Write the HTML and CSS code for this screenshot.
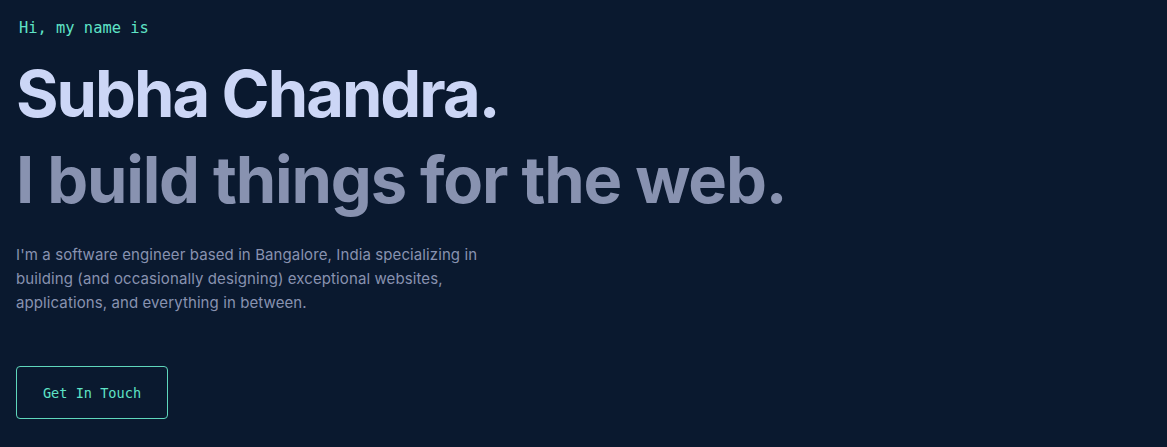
FILE: index.html
```html
<!DOCTYPE html>
<html lang="en">
<head>
<meta charset="utf-8">
<title>Subha Chandra</title>
<link rel="stylesheet" href="styles.css">
</head>
<body>
<main class="hero">
  <p class="hero-intro">Hi, my name is</p>
  <h1 class="hero-name">Subha Chandra.</h1>
  <h2 class="hero-tag">I build things for the web.</h2>
  <p class="hero-desc">I'm a software engineer based in Bangalore, India specializing in building (and occasionally designing) exceptional websites, applications, and everything in between.</p>
  <a class="hero-btn" href="#contact">Get In Touch</a>
</main>
</body>
</html>
```
FILE: styles.css
```css
html, body {
  margin: 0;
  padding: 0;
  background: #0a192f;
  height: 100%;
}
body {
  font-family: "Inter", "Liberation Sans", sans-serif;
  overflow: hidden;
}
.hero {
  display: flex;
  flex-direction: column;
  align-items: flex-start;
  padding: 17px 0 0 16px;
}
.hero-intro {
  margin: 0 0 0 3px;
  font-family: "DejaVu Sans Mono", monospace;
  font-size: 15.4px;
  line-height: 22px;
  color: #5fe3c6;
}
.hero-name, .hero-tag {
  margin: 0;
  font-size: 65px;
  font-weight: 700;
  line-height: 86px;
  letter-spacing: -1.2px;
}
.hero-name {
  color: #ccd6f6;
  margin-top: 12px;
  letter-spacing: -2px;
}
.hero-tag {
  color: #8892b0;
}
.hero-desc {
  margin: 20px 0 0 0;
  max-width: 490px;
  font-size: 15px;
  line-height: 24px;
  letter-spacing: 0.1px;
  color: #8892b0;
}
.hero-btn {
  margin-top: 51px;
  display: flex;
  align-items: center;
  justify-content: center;
  width: 150px;
  height: 51px;
  border: 1px solid #5fd6bc;
  border-radius: 4px;
  font-family: "DejaVu Sans Mono", monospace;
  font-size: 13.6px;
  color: #5fe3c6;
  text-decoration: none;
}
```
